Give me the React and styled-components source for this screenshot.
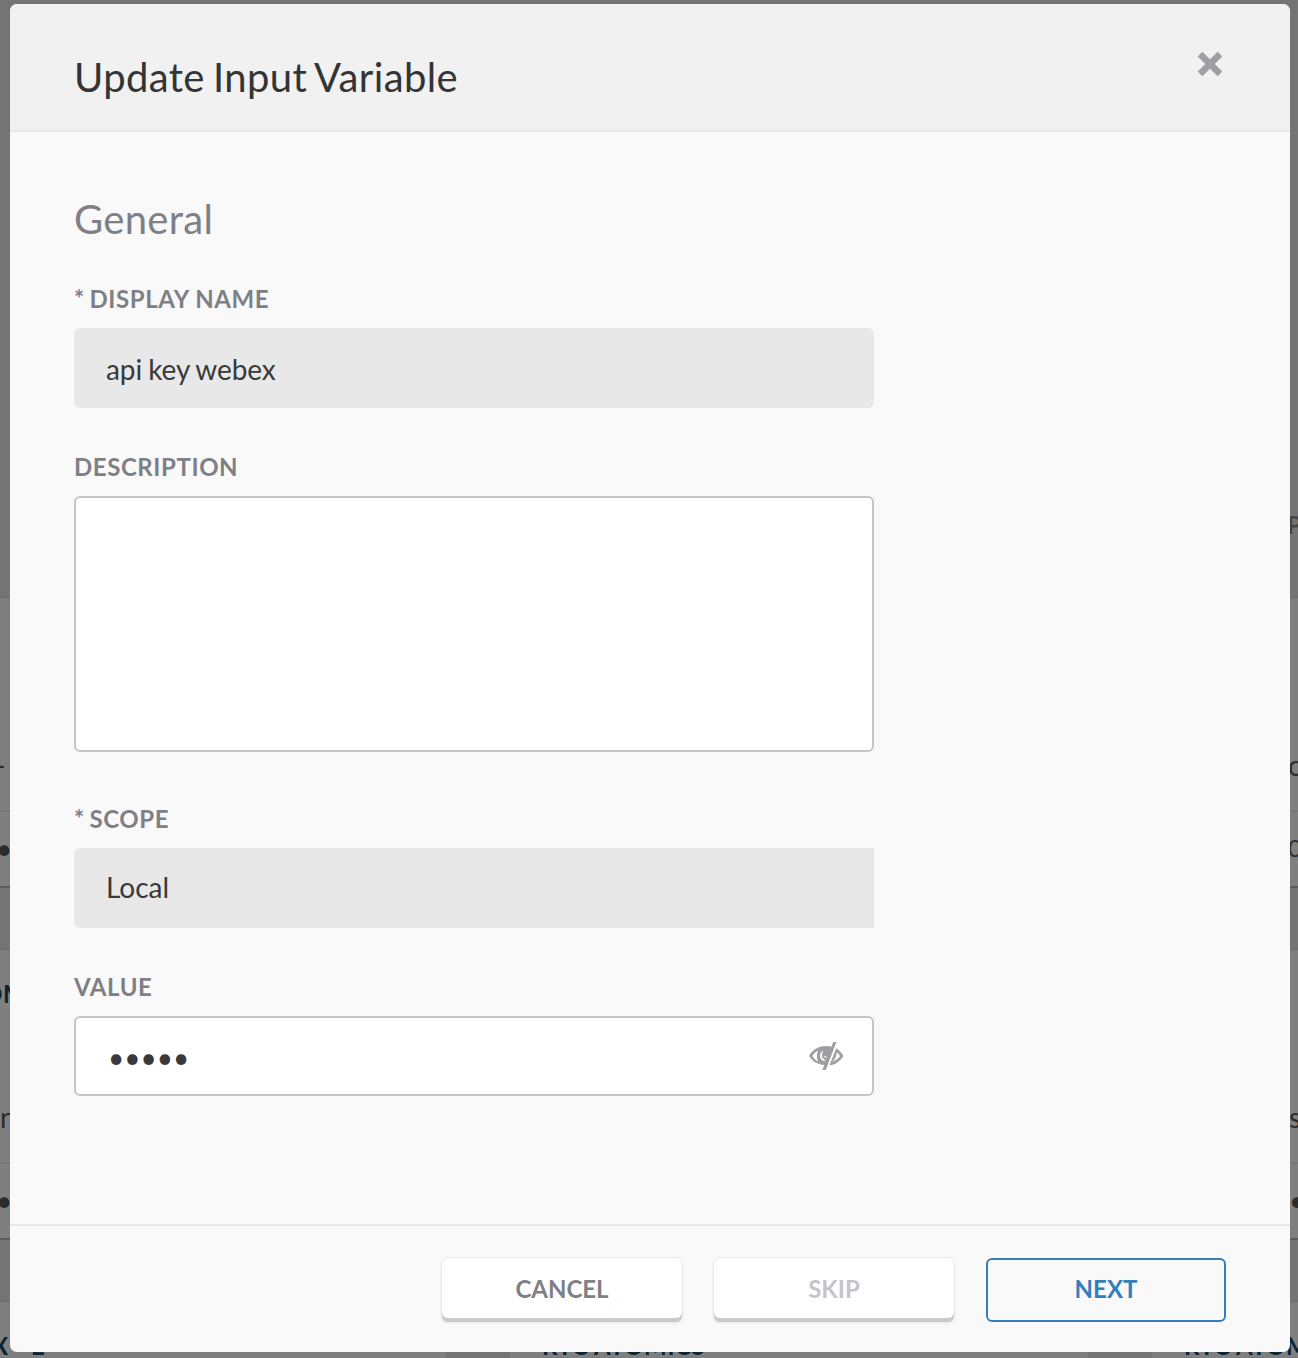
import React from "react";
import styled, { createGlobalStyle } from "styled-components";

const GlobalStyle = createGlobalStyle`
  *, *::before, *::after { box-sizing: border-box; }
  body { margin: 0; font-family: Lato, "Liberation Sans", sans-serif; }
  button, input, textarea { font-family: inherit; }
`;

const Page = styled.div`
  position: relative;
  width: 1298px;
  height: 1358px;
  overflow: hidden;
  background: #e9e9e9;
`;

/* workspace behind the dialog */
const Toolbar = styled.div`
  height: 597px;
  padding: 511px 0 0 1287px;
  font-size: 24px;
  line-height: 28px;
  font-weight: 700;
  color: #8a8a8a;
  white-space: nowrap;
`;

const CardGrid = styled.div`
  display: grid;
  grid-template-columns: repeat(3, 578px);
  gap: 61px 64px;
  width: 1862px;
  margin-left: -132px;
`;

const Card = styled.article`
  display: flex;
  flex-direction: column;
  height: 291px;
  overflow: hidden;
  background: #fff;
  border-top: 1px solid #d8d8d8;
  border-bottom: 2px solid #b8b8b8;
  white-space: nowrap;
`;

const CardBody = styled.div`
  display: flex;
  flex-direction: column;
  justify-content: space-between;
  height: 212px;
  padding: 29px 0 28px;
`;

const CardTitle = styled.h3`
  margin: 0;
  padding-left: ${(p) => p.$indent}px;
  font-size: 24px;
  line-height: 30px;
  font-weight: 700;
  letter-spacing: 0.6px;
  color: #164460;
`;

const CardText = styled.p`
  margin: 0;
  padding-left: ${(p) => p.$indent}px;
  font-size: 28px;
  line-height: 34px;
  color: #585858;
`;

const CardFooter = styled.div`
  flex: 1;
  padding: 19px 0 0 ${(p) => p.$indent}px;
  border-top: 2px solid #efefef;
  font-size: ${(p) => p.$size || 28}px;
  line-height: 34px;
  color: #585858;
`;

const Scrim = styled.div`
  position: absolute;
  inset: 0;
  display: flex;
  padding: 4px 8px 6px 10px;
  background: rgba(0, 0, 0, 0.5);
`;

/* dialog */
const Dialog = styled.section`
  display: flex;
  flex-direction: column;
  width: 1280px;
  height: 1348px;
  overflow: hidden;
  border-radius: 7px;
  background: #f9f9f9;
`;

const DialogHeader = styled.header`
  display: flex;
  justify-content: space-between;
  height: 128px;
  padding: 47px 67px 0 64px;
  background: #f1f1f1;
  border-bottom: 2px solid #e8e8e8;
`;

const DialogTitle = styled.h1`
  margin: 0;
  font-size: 40px;
  line-height: 52px;
  font-weight: 400;
  letter-spacing: 0.35px;
  word-spacing: -2.2px;
  color: #343435;
`;

const CloseButton = styled.button`
  width: 26px;
  height: 26px;
  padding: 0;
  border: 0;
  background: none;
  svg { display: block; }
`;

const DialogBody = styled.form`
  flex: 1;
  display: flex;
  flex-direction: column;
  padding: 63px 64px 64px;
`;

const SectionTitle = styled.h2`
  margin: 0 0 25px;
  font-size: 40px;
  line-height: 48px;
  font-weight: 400;
  letter-spacing: 0.3px;
  color: #7f7f86;
`;

const Field = styled.div`
  display: flex;
  flex-direction: column;
  width: 800px;
  margin-bottom: ${(p) => p.$after || 0}px;
`;

const Label = styled.label`
  height: 60px;
  padding-top: 16px;
  font-size: 24px;
  line-height: 30px;
  font-weight: 700;
  letter-spacing: 0.57px;
  color: #7f7f86;
`;

const Star = styled.span`
  display: inline-block;
  width: 15.5px;
`;

const ReadOnly = styled.div`
  height: 80px;
  padding: ${(p) => p.$top}px 32px 0;
  border-radius: ${(p) => p.$radius};
  background: #e8e8e8;
  font-size: 28px;
  line-height: 34px;
  word-spacing: -1px;
  letter-spacing: ${(p) => p.$tracking || 0}px;
  color: #39393b;
`;

const TextArea = styled.textarea`
  display: block;
  height: 256px;
  padding: 22px 30px;
  resize: none;
  border: 2px solid #c4c4c9;
  border-radius: 6px;
  background: #fff;
  font-size: 28px;
`;

const SecretBox = styled.div`
  display: flex;
  justify-content: space-between;
  align-items: center;
  height: 80px;
  padding: 0 28px 0 32px;
  border: 2px solid #c4c4c9;
  border-radius: 6px;
  background: #fff;
  font-size: 28px;
  line-height: 34px;
  color: #39393b;
`;

const Secret = styled.span`
  padding-top: 2px;
`;

const DialogFooter = styled.footer`
  display: flex;
  justify-content: flex-end;
  gap: 32px;
  height: 128px;
  padding: 32px 64px 0;
  border-top: 2px solid #e8e8e8;
`;

const Button = styled.button`
  width: 240px;
  height: 60px;
  padding: 2px 0 0;
  border: 0;
  border-radius: 6px;
  background: #fff;
  box-shadow: 0 4px 0 #cacaca, 0 0 0 1px #e9e9e9, 0 4px 2px 1px #e4e4e4;
  font-size: 24px;
  line-height: 30px;
  font-weight: 700;
  color: ${(p) => (p.disabled ? "#c4c4c9" : "#7f7f86")};
`;

const PrimaryButton = styled(Button)`
  height: 64px;
  padding: 0 0 2px;
  border: 2px solid #357ebd;
  background: transparent;
  box-shadow: none;
  color: #357ebd;
`;

const CloseIcon = () => (
  <svg width="26" height="26" viewBox="0 0 26 26" fill="none">
    <path d="M3 3.2 23 22.8M23 3.2 3 22.8" stroke="#9e9ea3" strokeWidth="6.6" />
  </svg>
);

const HiddenIcon = () => (
  <svg width="36" height="30" viewBox="0 0 36 30" fill="none">
    <path
      fill="#9e9ea3"
      fillRule="evenodd"
      d="M1 15C5 8.200 11 5 18 5c2.300 0 4.300.3 6.200.9L16.600 23.900C10 23.800 4.800 20.900 1 15ZM4.300 15c1.600 2.500 3.400 4.300 5.700 5.500-1.500-3.100-1.500-7.600.2-10.900C7.800 10.700 5.900 12.500 4.300 15ZM15.600 9.500c-3.400 1.500-4.500 5.500-2.500 8.600.9 1.400 2.200 2.100 3.400 2.200l.5-1.400c-2.200-.8-3.400-2.900-3-5.400.2-1.600.8-2.900 1.600-4ZM16.200 14.400c-.2 1.400.6 2.400 1.900 2.300l.5-1.400c-1.100.3-1.900 0-2.400-.9Z"
    />
    <path d="M25.200 1h3.200L17.800 29h-3.400Z" fill="#9e9ea3" />
    <path
      fill="#9e9ea3"
      fillRule="evenodd"
      d="M28.200 7.300c2.900 1.700 5.300 4.300 7.200 7.700-3.600 5.800-8.300 8.800-13.900 9.200ZM28.700 10.900c.1 3.700-1.400 7-4.500 10 3.200-1.200 5.800-3.100 7.900-5.900-1-1.600-2.100-2.900-3.400-4.100Z"
    />
  </svg>
);

const cards = [
  { title: "", ti: 32, text: "-", xi: 127, foot: "•", fi: 128 },
  { title: "", ti: 32, text: "", xi: 32, foot: "", fi: 32 },
  { title: "", ti: 32, text: "o", xi: 136, foot: "0", fi: 136, size: 24 },
  { title: "OM", ti: 115, text: "n", xi: 132, foot: "•", fi: 128 },
  { title: "", ti: 32, text: "", xi: 32, foot: "", fi: 32 },
  { title: "", ti: 32, text: "s", xi: 137, foot: "•", fi: 137 },
  { title: "X - E", ti: 124, text: "", xi: 32, foot: "", fi: 32 },
  { title: "RTC ATOMICS", ti: 32, text: "", xi: 32, foot: "", fi: 32 },
  { title: "RTC ATOMICS", ti: 32, text: "", xi: 32, foot: "", fi: 32 },
];

export default function App() {
  return (
    <Page>
      <GlobalStyle />
      <Toolbar>P</Toolbar>
      <CardGrid>
        {cards.map((c, i) => (
          <Card key={i}>
            <CardBody>
              <CardTitle $indent={c.ti}>{c.title}</CardTitle>
              <CardText $indent={c.xi}>{c.text}</CardText>
            </CardBody>
            <CardFooter $indent={c.fi} $size={c.size}>{c.foot}</CardFooter>
          </Card>
        ))}
      </CardGrid>
      <Scrim>
        <Dialog role="dialog">
          <DialogHeader>
            <DialogTitle>Update Input Variable</DialogTitle>
            <CloseButton aria-label="Close"><CloseIcon /></CloseButton>
          </DialogHeader>
          <DialogBody>
            <SectionTitle>General</SectionTitle>
            <Field $after={28}>
              <Label><Star>*</Star>DISPLAY NAME</Label>
              <ReadOnly $top={24} $radius="6px" $tracking={-0.06}>api key webex</ReadOnly>
            </Field>
            <Field $after={36}>
              <Label>DESCRIPTION</Label>
              <TextArea />
            </Field>
            <Field $after={28}>
              <Label><Star>*</Star>SCOPE</Label>
              <ReadOnly $top={22} $radius="6px 0 0 6px">Local</ReadOnly>
            </Field>
            <Field>
              <Label>VALUE</Label>
              <SecretBox>
                <Secret>•••••</Secret>
                <HiddenIcon />
              </SecretBox>
            </Field>
          </DialogBody>
          <DialogFooter>
            <Button type="button">CANCEL</Button>
            <Button type="button" disabled>SKIP</Button>
            <PrimaryButton type="button">NEXT</PrimaryButton>
          </DialogFooter>
        </Dialog>
      </Scrim>
    </Page>
  );
}
